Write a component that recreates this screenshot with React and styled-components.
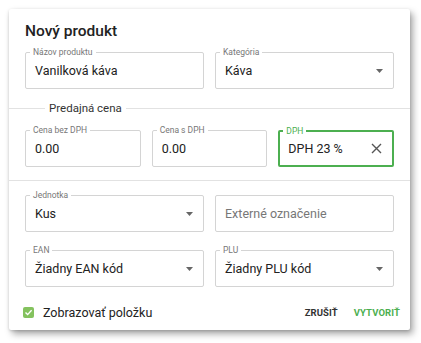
import React from "react";
import styled, { createGlobalStyle } from "styled-components";

const GlobalStyle = createGlobalStyle`
  body {
    margin: 0;
    background: #ffffff;
    font-family: Roboto, "Liberation Sans", sans-serif;
  }
`;

const Page = styled.div`
  padding: 9px;
  width: 421px;
  height: 343px;
  box-sizing: border-box;
`;

const Dialog = styled.div`
  width: 401px;
  height: 321px;
  background: #fff;
  border-radius: 2px;
  box-shadow: 0 1px 3px rgba(0, 0, 0, 0.15), 3px 4px 7px rgba(0, 0, 0, 0.35);
  display: flex;
  flex-direction: column;
`;

const Title = styled.h2`
  margin: 12px 16px 11px;
  font-size: 15.5px;
  line-height: 20px;
  font-weight: 500;
  color: #222;
`;

const Grid = styled.div`
  display: grid;
  grid-template-columns: repeat(${(p) => p.cols || 2}, 1fr);
  column-gap: 11px;
  row-gap: 18px;
  padding: 0 16px;
  margin-top: ${(p) => p.top || 0}px;
`;

const Section = styled.div`
  position: relative;
  margin-top: 19px;
  border-top: 1px solid #e2e2e2;
  border-bottom: 1px solid #e2e2e2;
  padding: 21px 0 13px;
`;

const SectionLabel = styled.span`
  position: absolute;
  top: -8px;
  left: 36px;
  padding: 0 4px;
  background: #fff;
  font-size: 11.5px;
  line-height: 15px;
  color: #333;
`;

const Field = styled.div`
  position: relative;
  height: 37px;
  box-sizing: border-box;
  border: ${(p) => (p.focused ? "2px solid #4caf50" : "1px solid #d4d4d4")};
  border-radius: 2px;
  display: flex;
  align-items: center;
  padding: 0 ${(p) => (p.focused ? 8 : 9)}px;
`;

const FieldLabel = styled.span`
  position: absolute;
  top: -6px;
  left: ${(p) => (p.focused ? 3 : 4)}px;
  padding: 0 3px;
  background: #fff;
  font-size: 8.5px;
  line-height: 10px;
  color: ${(p) => (p.focused ? "#4caf50" : "#777")};
`;

const Value = styled.span`
  flex: 1;
  font-size: 12.5px;
  color: ${(p) => (p.placeholder ? "#777" : "#222")};
  white-space: nowrap;
`;

const IconSlot = styled.span`
  display: flex;
  align-items: center;
  margin-right: ${(p) => p.right || 0}px;
`;

const Footer = styled.div`
  margin-top: auto;
  height: 36px;
  display: flex;
  align-items: center;
  padding: 4px 10px 0 14px;
`;

const CheckRow = styled.label`
  display: flex;
  align-items: center;
  gap: 9px;
  font-size: 12.5px;
  color: #222;
`;

const Box = styled.span`
  width: 11px;
  height: 11px;
  border-radius: 2px;
  background: #84c25e;
  display: flex;
  align-items: center;
  justify-content: center;
`;

const Actions = styled.div`
  margin-left: auto;
  display: flex;
  gap: 16px;
`;

const TextButton = styled.button`
  border: 0;
  background: none;
  padding: 0;
  font-family: Roboto, "Liberation Sans", sans-serif;
  font-size: 9.5px;
  font-weight: 700;
  letter-spacing: 0.1px;
  color: ${(p) => (p.primary ? "#4caf50" : "#333")};
`;

const Arrow = () => (
  <svg width="7" height="4" viewBox="0 0 7 4">
    <polygon points="0,0 7,0 3.5,4" fill="#666" />
  </svg>
);

const Close = () => (
  <svg width="11" height="11" viewBox="0 0 11 11">
    <path d="M1 1L10 10M10 1L1 10" stroke="#555" strokeWidth="1.4" />
  </svg>
);

const Input = ({ label, value, placeholder, select, focused, clear }) => (
  <Field focused={focused}>
    {label && <FieldLabel focused={focused}>{label}</FieldLabel>}
    <Value placeholder={placeholder}>{value || placeholder}</Value>
    {select && (
      <IconSlot right={1}>
        <Arrow />
      </IconSlot>
    )}
    {clear && (
      <IconSlot right={2}>
        <Close />
      </IconSlot>
    )}
  </Field>
);

export default function App() {
  return (
    <Page>
      <GlobalStyle />
      <Dialog>
        <Title>Nový produkt</Title>
        <Grid>
          <Input label="Názov produktu" value="Vanilková káva" />
          <Input label="Kategória" value="Káva" select />
        </Grid>
        <Section>
          <SectionLabel>Predajná cena</SectionLabel>
          <Grid cols={3}>
            <Input label="Cena bez DPH" value="0.00" />
            <Input label="Cena s DPH" value="0.00" />
            <Input label="DPH" value="DPH 23 %" focused clear />
          </Grid>
        </Section>
        <Grid top={14}>
          <Input label="Jednotka" value="Kus" select />
          <Input placeholder="Externé označenie" />
          <Input label="EAN" value="Žiadny EAN kód" select />
          <Input label="PLU" value="Žiadny PLU kód" select />
        </Grid>
        <Footer>
          <CheckRow>
            <Box>
              <svg width="9" height="9" viewBox="0 0 9 9">
                <path d="M1.5 4.6L3.6 6.6L7.6 2.2" stroke="#fff" strokeWidth="1.4" fill="none" />
              </svg>
            </Box>
            Zobrazovať položku
          </CheckRow>
          <Actions>
            <TextButton>ZRUŠIŤ</TextButton>
            <TextButton primary>VYTVORIŤ</TextButton>
          </Actions>
        </Footer>
      </Dialog>
    </Page>
  );
}
